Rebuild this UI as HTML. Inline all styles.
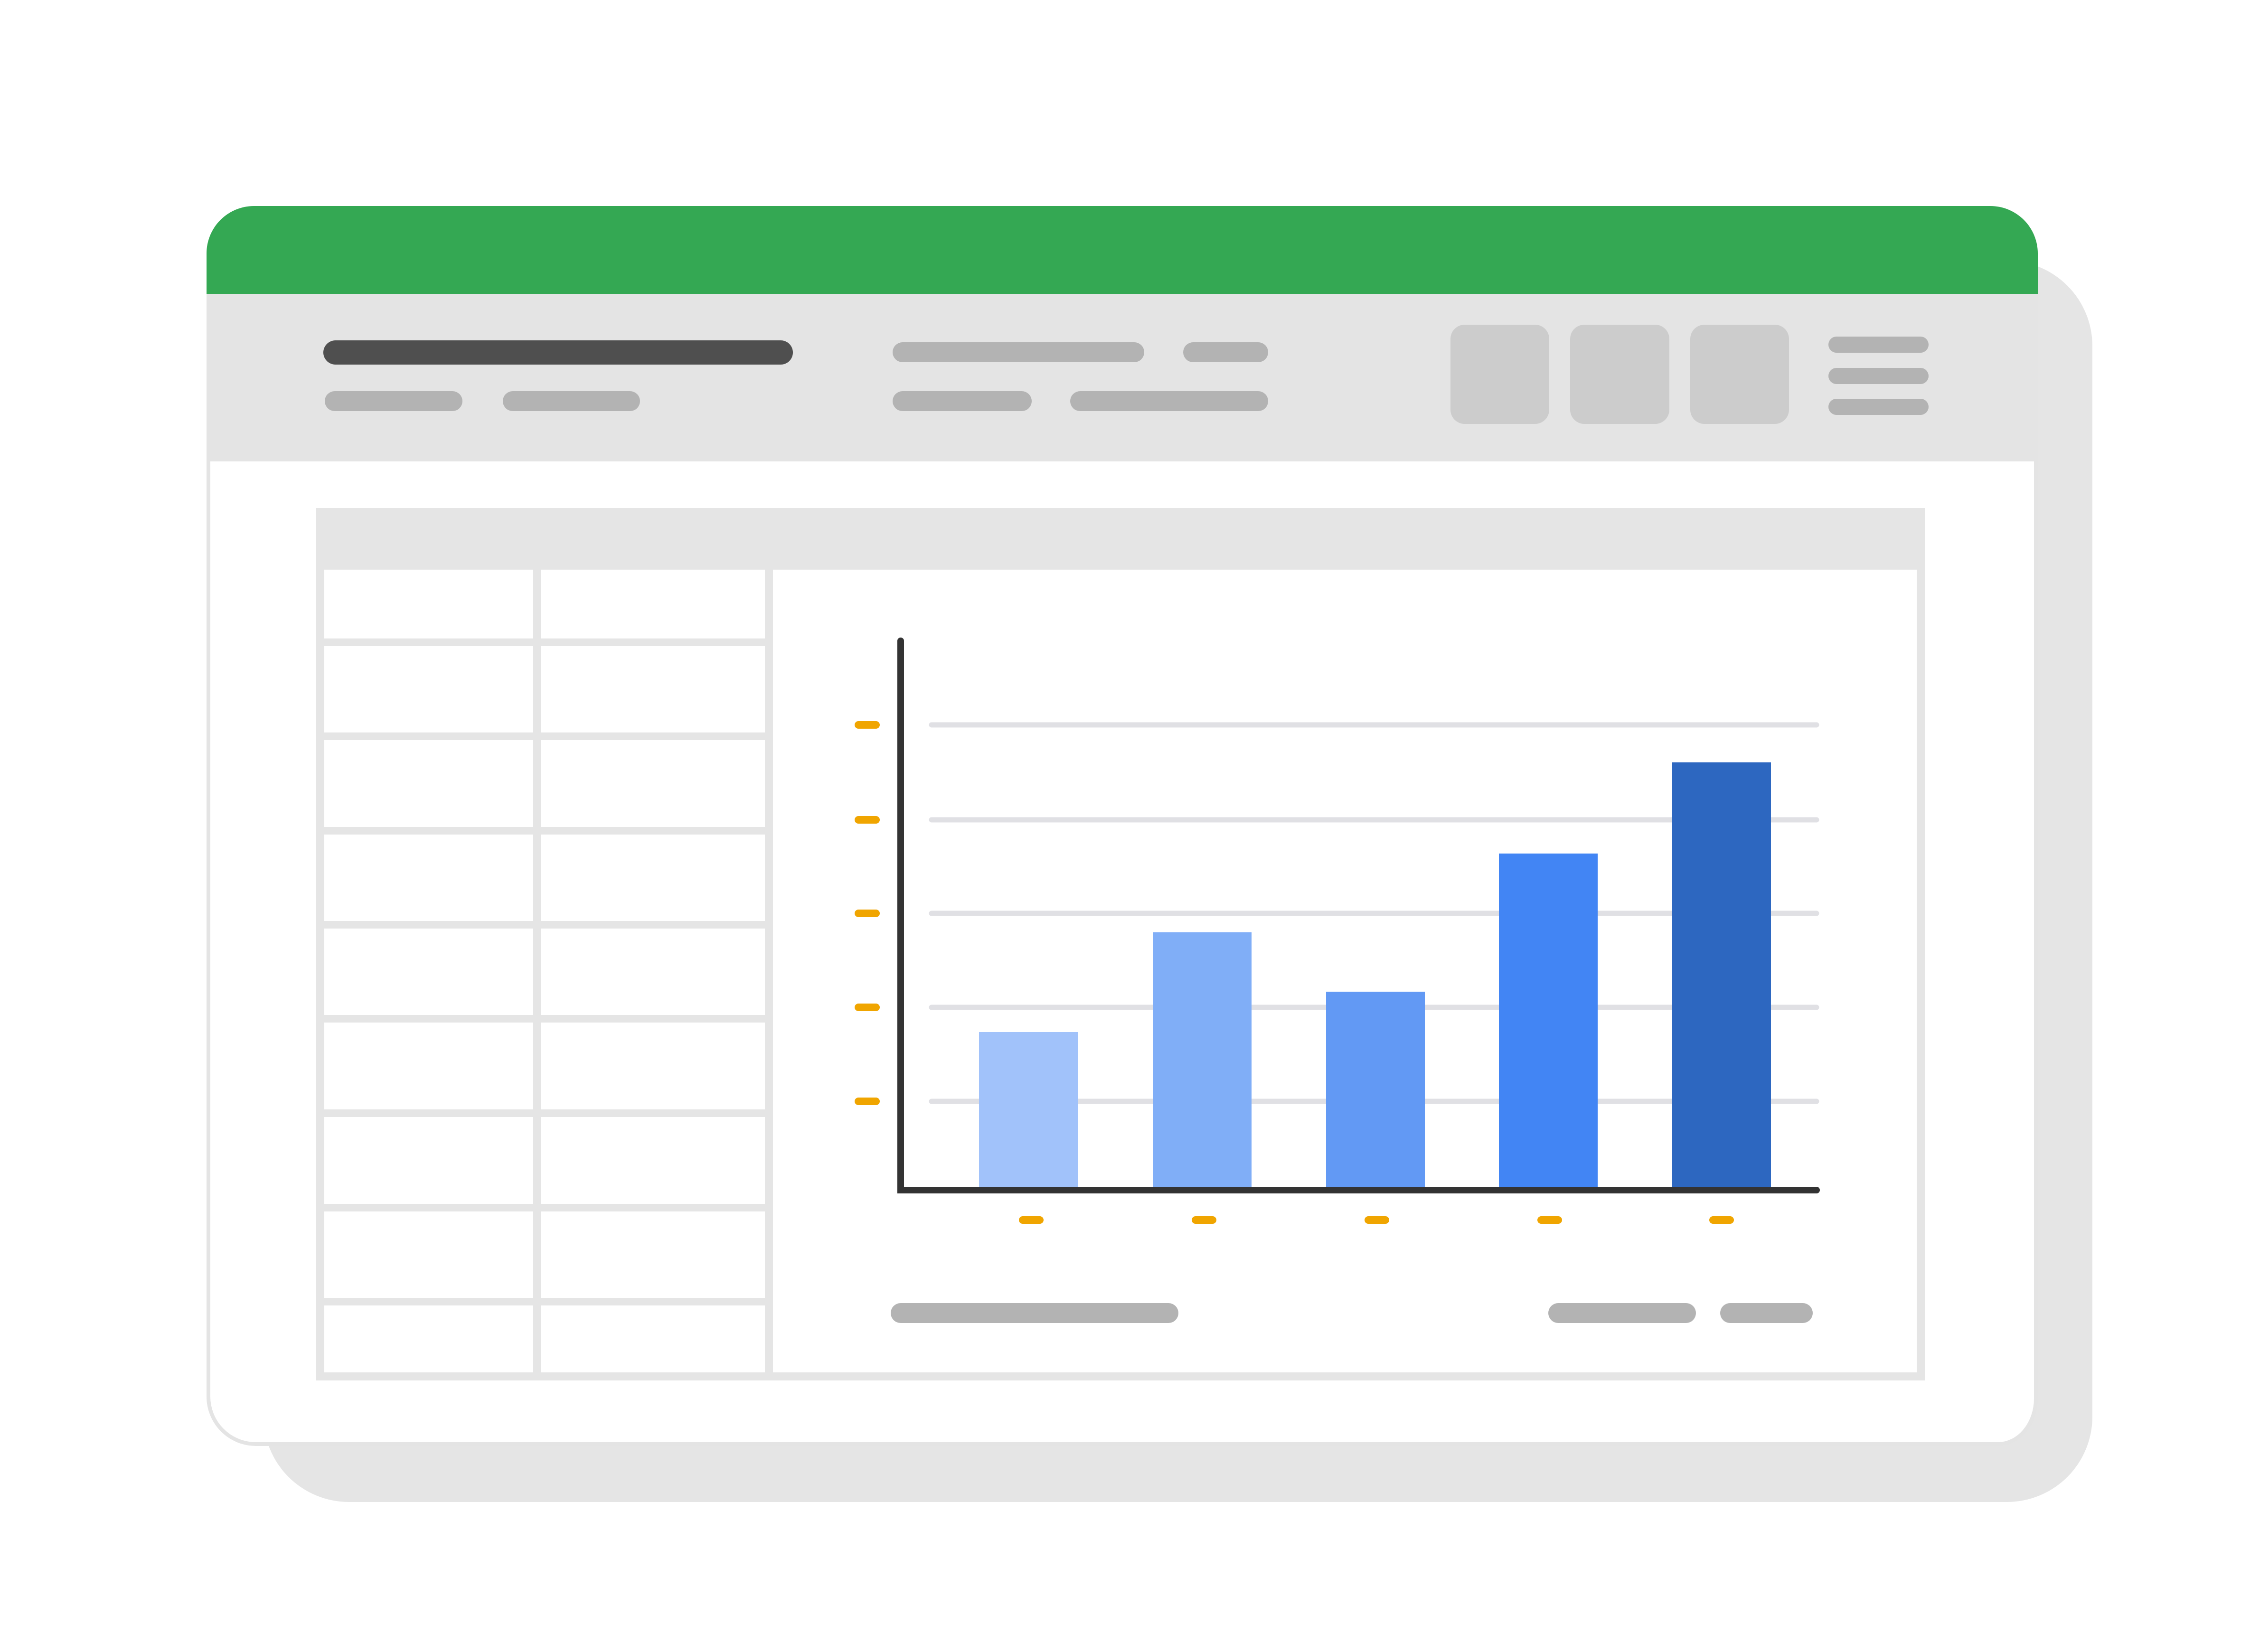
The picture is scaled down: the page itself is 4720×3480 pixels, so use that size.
<!DOCTYPE html>
<html><head><meta charset="utf-8"><style>
html,body{margin:0;padding:0;background:#fff;width:4720px;height:3480px;overflow:hidden}
svg{display:block}
</style></head><body>
<svg width="4720" height="3480" viewBox="0 0 4720 3480" xmlns="http://www.w3.org/2000/svg">
<rect width="4720" height="3480" fill="#fff"/>
<!-- shadow -->
<rect x="555" y="549" width="3852" height="2615" rx="180" fill="#e5e5e5"/>
<!-- card -->
<path d="M439 534 A96 96 0 0 1 535 438 L4192 438 A96 96 0 0 1 4288 534 L4288 2946 A80 96 0 0 1 4208 3042 L539 3042 A100 100 0 0 1 439 2942 Z" fill="#fff" stroke="#e4e4e4" stroke-width="8"/>
<!-- green header -->
<path d="M435 534 A100 100 0 0 1 535 434 L4192 434 A100 100 0 0 1 4292 534 L4292 619 L435 619 Z" fill="#34a853"/>
<!-- toolbar -->
<rect x="435" y="619" width="3857" height="353" fill="#e4e4e4"/>
<!-- toolbar pills -->
<rect x="681" y="717" width="989" height="51" rx="25.5" fill="#4f4f4f"/>
<rect x="684" y="824" width="290" height="42" rx="21" fill="#b3b3b3"/>
<rect x="1059" y="824" width="289" height="42" rx="21" fill="#b3b3b3"/>
<rect x="1880" y="721" width="530" height="42" rx="21" fill="#b3b3b3"/>
<rect x="2492" y="721" width="179" height="42" rx="21" fill="#b3b3b3"/>
<rect x="1880" y="824" width="293" height="42" rx="21" fill="#b3b3b3"/>
<rect x="2254" y="824" width="417" height="42" rx="21" fill="#b3b3b3"/>
<rect x="3055" y="684" width="208" height="209" rx="30" fill="#cccccc"/>
<rect x="3307" y="684" width="209" height="209" rx="30" fill="#cccccc"/>
<rect x="3560" y="684" width="208" height="209" rx="30" fill="#cccccc"/>
<rect x="3851" y="709" width="211" height="34" rx="17" fill="#b3b3b3"/>
<rect x="3851" y="775" width="211" height="34" rx="17" fill="#b3b3b3"/>
<rect x="3851" y="840" width="211" height="34" rx="17" fill="#b3b3b3"/>
<!-- table -->
<rect x="666" y="1070" width="3388" height="1838" fill="#e5e5e5"/>
<g fill="#fff">
<rect x="683" y="1200" width="440" height="145"/><rect x="1139" y="1200" width="472" height="145"/>
<rect x="683" y="1361" width="440" height="182"/><rect x="1139" y="1361" width="472" height="182"/>
<rect x="683" y="1559" width="440" height="183"/><rect x="1139" y="1559" width="472" height="183"/>
<rect x="683" y="1758" width="440" height="182"/><rect x="1139" y="1758" width="472" height="182"/>
<rect x="683" y="1956" width="440" height="182"/><rect x="1139" y="1956" width="472" height="182"/>
<rect x="683" y="2154" width="440" height="183"/><rect x="1139" y="2154" width="472" height="183"/>
<rect x="683" y="2353" width="440" height="183"/><rect x="1139" y="2353" width="472" height="183"/>
<rect x="683" y="2552" width="440" height="182"/><rect x="1139" y="2552" width="472" height="182"/>
<rect x="683" y="2750" width="440" height="141"/><rect x="1139" y="2750" width="472" height="141"/>
<rect x="1628" y="1200" width="2409" height="1691"/>
</g>
<!-- gridlines -->
<g stroke="#e0e0e4" stroke-width="11" stroke-linecap="round">
<line x1="1962" y1="1527" x2="3826" y2="1527"/>
<line x1="1962" y1="1727" x2="3826" y2="1727"/>
<line x1="1962" y1="1924" x2="3826" y2="1924"/>
<line x1="1962" y1="2122" x2="3826" y2="2122"/>
<line x1="1962" y1="2320" x2="3826" y2="2320"/>
</g>
<!-- ticks -->
<g stroke="#f0a500" stroke-width="16" stroke-linecap="round">
<line x1="1808" y1="1527" x2="1845" y2="1527"/>
<line x1="1808" y1="1727" x2="1845" y2="1727"/>
<line x1="1808" y1="1924" x2="1845" y2="1924"/>
<line x1="1808" y1="2122" x2="1845" y2="2122"/>
<line x1="1808" y1="2320" x2="1845" y2="2320"/>
<line x1="2154" y1="2570" x2="2190" y2="2570"/>
<line x1="2518" y1="2570" x2="2554" y2="2570"/>
<line x1="2882" y1="2570" x2="2918" y2="2570"/>
<line x1="3246" y1="2570" x2="3282" y2="2570"/>
<line x1="3608" y1="2570" x2="3644" y2="2570"/>
</g>
<!-- bars -->
<rect x="2062" y="2174" width="209" height="340" fill="#a1c2fa"/>
<rect x="2428" y="1964" width="208" height="550" fill="#80aef7"/>
<rect x="2793" y="2089" width="208" height="425" fill="#6299f4"/>
<rect x="3157" y="1798" width="208" height="716" fill="#4285f4"/>
<rect x="3522" y="1606" width="208" height="908" fill="#2d67c0"/>
<!-- axes -->
<path d="M1897 1350 L1897 2507 L3826 2507" stroke="#333333" stroke-width="14" stroke-linecap="round" fill="none"/>
<!-- bottom pills -->
<rect x="1876" y="2745" width="606" height="42" rx="21" fill="#b3b3b3"/>
<rect x="3261" y="2745" width="311" height="42" rx="21" fill="#b3b3b3"/>
<rect x="3623" y="2745" width="195" height="42" rx="21" fill="#b3b3b3"/>
</svg>
</body></html>
